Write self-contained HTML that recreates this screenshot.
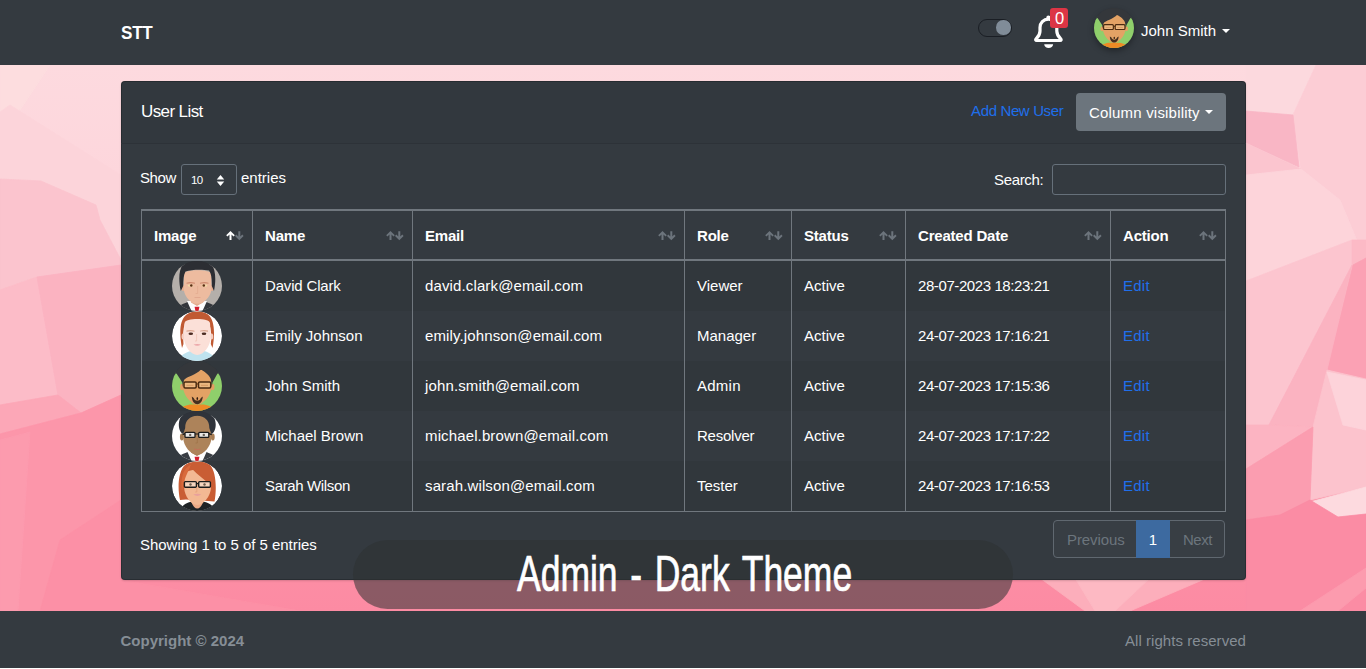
<!DOCTYPE html>
<html lang="en">
<head>
<meta charset="utf-8">
<title>STT - User List</title>
<style>
*{box-sizing:border-box;margin:0;padding:0}
html,body{width:1366px;height:669px;overflow:hidden;background:#fff}
body{font-family:"Liberation Sans",sans-serif;font-size:15px;color:#fff;position:relative;line-height:1.5}
a{text-decoration:none;color:#1f6feb}
.abs{position:absolute;white-space:nowrap}
#nav{position:absolute;left:0;top:0;width:1366px;height:65px;background:#343a40}
#bg{position:absolute;left:0;top:65px;width:1366px;height:546px;overflow:hidden;background:#fbb5c1}
#bg svg{display:block}
#footer{position:absolute;left:0;top:611px;width:1366px;height:57px;background:#343a40}
#card{position:absolute;left:121px;top:81px;width:1125px;height:499px;background:#343a40;border-radius:4px;box-shadow:inset 0 0 0 1px rgba(0,0,0,.22),0 1px 2px rgba(0,0,0,.15)}
#card-head{position:absolute;left:0;top:0;width:1125px;height:63px;border-bottom:1px solid #2d3238;background:rgba(0,0,0,.03);border-radius:4px 4px 0 0}
#pill{position:absolute;left:353px;top:540px;width:660px;height:69px;border-radius:35px;background:rgba(45,50,50,.55)}
#ptxt{position:absolute;left:164px;top:9px;font-size:50px;line-height:50px;white-space:nowrap;display:inline-block;transform:scaleX(.7095);transform-origin:0 0;color:#fff;-webkit-text-stroke:.7px #fff;word-spacing:4px}
#copy{left:120.500px;top:19px;font-weight:700;color:#868e96;font-size:15px;line-height:22px;letter-spacing:0}
#rights{right:120px;top:19px;color:#868e96;font-size:15px;line-height:22px;letter-spacing:.05px}
#brand{left:121px;top:18px;font-size:19px;font-weight:700;letter-spacing:-.3px;line-height:30px;transform:scaleX(.9);transform-origin:0 0}
#switch{position:absolute;left:978px;top:18.500px;width:34px;height:18.500px;border-radius:9.500px;background:#343a40;border:1.500px solid #1a1e24}
#switch i{position:absolute;right:.5px;top:.7px;width:14.500px;height:14.500px;border-radius:50%;background:#808c98}
#bell{left:1033px;top:14px}
#badge{left:1050px;top:8px;width:18px;height:20px;border-radius:3px;background:#dc3545;color:#fff;font-size:16.500px;line-height:20px;text-align:center;padding-left:1px}
#navava{left:1094px;top:8px;width:40px;height:40px;border-radius:50%;box-shadow:0 3px 6px rgba(0,0,0,.35)}
#uname{left:1141px;top:20px;font-size:15px;line-height:22px}
.caret{width:0;height:0;border-left:4px solid transparent;border-right:4px solid transparent;border-top:4px solid #fff}
#ctitle{left:20px;top:19px;font-size:17px;line-height:24px;letter-spacing:-.6px}
#addnew{left:850px;top:18px;font-size:15px;line-height:24px;letter-spacing:-.36px}
#colvis{left:955px;top:12px;width:150px;height:38px;border-radius:4px;background:#6c757d;font-size:15px;line-height:39px;padding-left:13px;letter-spacing:.19px}
#colvis .caret{position:absolute;left:129px;top:17px}
#lshow{left:19px;top:86px;line-height:22px;letter-spacing:-.4px}
#lsel{left:60px;top:83px;width:56px;height:31px;border:1px solid #66707a;border-radius:3px}
#lsel span{position:absolute;left:9px;top:8px;font-size:11.500px;line-height:14px;letter-spacing:-.6px}
#lsel svg{position:absolute;left:33.500px;top:9.500px}
#lent{left:120px;top:86px;line-height:22px}
#lsearch{left:873px;top:88px;line-height:22px;letter-spacing:-.35px}
#sinput{left:931px;top:83px;width:174px;height:31px;border:1px solid #66707a;border-radius:3px}
#tbl{position:absolute;left:20px;top:128px;width:1084px;border-collapse:collapse;table-layout:fixed;border:1px solid #70777e}
#tbl th,#tbl td{border:0 solid #70777e;border-left-width:1px;border-right-width:1px;padding:0 12px;text-align:left;vertical-align:middle;white-space:nowrap;font-size:15px}
#tbl th{height:50px;padding-top:2px;border-top-width:2px;border-bottom-width:2px;font-weight:700;position:relative;letter-spacing:-.2px}
#tbl td{height:50px}
#tbl td.em{letter-spacing:.13px}
#tbl td.dt{letter-spacing:-.41px}
#tbl td a{letter-spacing:.25px}
#tbl td.img{padding:0;text-align:center;font-size:0;line-height:0}
#tbl td.img svg{display:inline-block;vertical-align:top}
#tbl tbody tr:nth-child(odd){background:rgba(0,0,0,.05)}
#tbl th .so{position:absolute;right:8px;top:20px}
#tbl th .so path{fill:#6c747c}
#tbl th.asc .so .up{fill:#fff}
#info{left:19px;top:453px;line-height:22px;letter-spacing:-.03px}
#pager{left:932px;top:439px;width:172px;height:38px;border:1px solid #606870;border-radius:4px;font-size:15px;line-height:38px;color:#6c757d;background:#383e44}
#pager span{position:absolute;top:0;height:36px}
#pager .pv{left:13px;letter-spacing:-.1px}#pager .pn{left:129px;letter-spacing:-.5px}
#pager .pc{left:82px;width:34px;top:-1px;height:38px;line-height:40px;background:#3d6aa0;color:#fff;text-align:center}
</style>
</head>
<body>
<svg width="0" height="0" style="position:absolute">
<defs>
<clipPath id="cc"><circle cx="25" cy="25" r="25"/></clipPath>
<symbol id="av1" viewBox="0 0 50 50"><g clip-path="url(#cc)">
<rect x="0" y="3" width="50" height="47" fill="#b4afaa"/><rect x="0" y="0" width="50" height="4" fill="#2c2e33"/>
<path d="M2 50C4 45 10 43.500 15.500 41L34.500 41C40 43.500 46 45 48 50Z" fill="#33363b"/>
<path d="M15 40L35 40L30.500 50L19.500 50Z" fill="#fdfdfd"/>
<path d="M19 36h12v5.500l-6 3.500l-6-3.500z" fill="#e3ab8d"/>
<path d="M22.600 45.800L27.400 45.800L26.600 50L23.400 50Z" fill="#d3202f"/>
<ellipse cx="11" cy="27" rx="1.700" ry="3" fill="#e5ad90"/><ellipse cx="40" cy="27" rx="1.700" ry="3" fill="#e5ad90"/>
<path d="M12 13C12 8 39 8 39.300 13L39.400 28C39.200 33 36 38 31 41.500C28 43.300 23 43.300 20 41.500C15 38 12 33 11.800 28Z" fill="#edbb9f"/>
<path d="M8.800 30C6.500 20 6.500 9 11 3.500C15 -1 35 -1 39.500 3.500C44 9 44 20 42 30L39.800 25C40 18 39.500 13 37 9.500C30 8 19 8.500 13.500 10.500C11.500 14 11.300 19 11.200 25Z" fill="#2c2e33"/>
<path d="M14.500 21.700q4-1.300 8.500 0v1q-4.500-.8-8.500 0z" fill="#cf8c70"/><path d="M28 21.700q4.500-1.300 8.500 0v1q-4-.8-8.500 0z" fill="#cf8c70"/>
<ellipse cx="18.500" cy="24.600" rx="2.800" ry="1.200" fill="#f3d9a8"/><ellipse cx="32.500" cy="24.600" rx="2.800" ry="1.200" fill="#f3d9a8"/>
<circle cx="19.300" cy="24.400" r="1.250" fill="#5a2f16"/><circle cx="31.800" cy="24.400" r="1.250" fill="#5a2f16"/>
<path d="M25.600 25v7.500h-2" fill="none" stroke="#e2aa8e" stroke-width=".7"/>
<path d="M22.500 36.500h6" stroke="#dda38b" stroke-width=".8"/>
</g></symbol>
<symbol id="av2" viewBox="0 0 50 50"><g clip-path="url(#cc)">
<circle cx="25" cy="25" r="25" fill="#fff"/>
<path d="M6 50C8 44 14 41.500 19 40L32 40C37 41.500 42 44 44 50Z" fill="#bfe3ef"/>
<path d="M20 36h11v4.500q-5.500 3-11 0z" fill="#f7d2c6"/>
<path d="M10 37C7.500 24 7 10 14 4C19 -.5 31 -.5 36 3.500C43 9 43 24 40.500 37L38.800 33C40 24 39 16 36 10L14 10C11 16 10.800 24 11.500 33Z" fill="#c05a33"/>
<ellipse cx="11" cy="25.500" rx="1.500" ry="3" fill="#f5cfc2"/><ellipse cx="39.700" cy="25.500" rx="1.500" ry="3" fill="#f5cfc2"/>
<path d="M12.500 12C13 6.500 37.500 6.500 38 12L38.800 26C38.500 35 31.500 44 25.300 44C19 44 12 35 11.800 26Z" fill="#fbe0d8"/>
<path d="M13 10C13 4 19 2.500 25 4.500C30 2.500 37.500 4 37.500 10C33 6.500 29 6 25.500 7C22 6 17 6.500 13 10Z" fill="#c05a33"/>
<path d="M14.500 19.600q4-1.400 8 .1v1q-4-1-8 0z" fill="#d9a58f"/><path d="M28 19.700q4-1.500 8-.1v1.100q-4-1-8-.1z" fill="#d9a58f"/>
<ellipse cx="18.800" cy="22.800" rx="2.300" ry="1.300" fill="#4a2b22"/><ellipse cx="32" cy="22.800" rx="2.300" ry="1.300" fill="#4a2b22"/>
<path d="M24.600 23v7h-1.600" fill="none" stroke="#efc4b6" stroke-width=".8"/>
<path d="M21.500 33.500q3.700-1.200 7.400 0q-3.700 2.400-7.400 0z" fill="#eca6a9"/>
</g></symbol>
<symbol id="av3" viewBox="0 0 50 50"><g clip-path="url(#cc)">
<rect x="0" y="11" width="50" height="39" fill="#8fcf6b"/><rect x="0" y="0" width="50" height="12" fill="#34373b"/>
<path d="M6 50C8 46 13 44.500 18 43.500L32 43.500C37 44.500 42 46 44 50Z" fill="#ee8a25"/>
<path d="M19.500 36h11v6q-5.500 3.500-11 0z" fill="#dd9a5c"/>
<ellipse cx="10" cy="26" rx="1.900" ry="3.200" fill="#e3a062"/><ellipse cx="40.600" cy="26" rx="1.900" ry="3.200" fill="#e3a062"/>
<path d="M11.500 14C12 7 38.500 7 39 14L39.400 27C39 33 33 43 25.300 43C17.500 43 11.500 33 11.200 27Z" fill="#e3a265"/>
<path d="M0 15L4.500 12.500L10.300 21.500L10.800 26L12 19C14 16 24 14 29 8.500C33 11 38 14.500 39 19L39.800 26L40.500 21.500L45.500 12.500L50 15L50 0L0 0Z" fill="#34373b"/>
<rect x="12" y="20.900" width="12.200" height="6" rx="1.200" fill="#ecb880" stroke="#4a2a10" stroke-width="1.500"/><rect x="26.500" y="20.900" width="12.200" height="6" rx="1.200" fill="#ecb880" stroke="#4a2a10" stroke-width="1.500"/>
<path d="M24 23h2.700" stroke="#5b3512" stroke-width="1.200"/>
<path d="M14.500 24.300h7M29 24.300h7" stroke="#c98a52" stroke-width=".7"/>
<path d="M19.800 35.500C20 40.500 22.500 43.200 25.300 43.200C28 43.200 30.500 40.500 30.800 35.500L28.800 37C28.300 38.800 27 39.600 25.300 39.600C23.500 39.600 22.300 38.800 21.800 37Z" fill="#46301f"/>
<ellipse cx="25.300" cy="37.400" rx=".8" ry="1.500" fill="#2c1a10"/>
</g></symbol>
<symbol id="av4" viewBox="0 0 50 50"><g clip-path="url(#cc)">
<rect x="0" y="4" width="50" height="46" fill="#fff"/><rect x="0" y="0" width="50" height="5" fill="#2f333a"/>
<path d="M2 50C4 45 10 43.500 15.500 41L34.500 41C40 43.500 46 45 48 50Z" fill="#393d43"/>
<path d="M15 40L35 40L30.500 50L19.500 50Z" fill="#fdfdfd"/>
<path d="M19 36h12v5.500l-6 3.500l-6-3.500z" fill="#a57a50"/>
<path d="M22.600 45.800L27.400 45.800L26.600 50L23.400 50Z" fill="#d3202f"/>
<ellipse cx="9.800" cy="26" rx="1.900" ry="3.400" fill="#a87d53"/><ellipse cx="40.800" cy="26" rx="1.900" ry="3.400" fill="#a87d53"/>
<path d="M11.500 14C12 1 38.500 1 39.200 14L39.500 27C39 35 32 43.800 25.300 43.800C18.500 43.800 11.500 35 11.200 27Z" fill="#ad835a"/>
<path d="M11.300 23C6.500 21.500 5.500 12 8.500 6.500C11 2 18 -1 25.300 -1C32.500 -1 39.500 2 42 6.500C45 12 44 21.500 39.300 23L37.300 17C37.500 10 33 5 25.300 4.800C17.500 5 13 10 13.200 17Z" fill="#2f333a"/>
<rect x="13" y="21.300" width="10" height="5" rx=".9" fill="#e9e7e4" stroke="#1b1b1b" stroke-width="1.300"/><rect x="26.700" y="21.300" width="10.100" height="5" rx=".9" fill="#e9e7e4" stroke="#1b1b1b" stroke-width="1.300"/>
<path d="M23 23h3.700M13 22.600L10.600 23.600M36.800 22.600L39.800 23.600" stroke="#1b1b1b" stroke-width="1.200" fill="none"/>
<circle cx="18.200" cy="23.900" r="1.200" fill="#6a625b"/><circle cx="31.800" cy="23.900" r="1.200" fill="#6a625b"/>
<path d="M25.300 27v5h-1.700" fill="none" stroke="#9f7349" stroke-width=".8"/>
<path d="M22 38q3.300 1.200 6.600 0" fill="none" stroke="#c4705a" stroke-width="1"/>
</g></symbol>
<symbol id="av5" viewBox="0 0 50 50"><g clip-path="url(#cc)">
<circle cx="25" cy="25" r="25" fill="#fff"/>
<path d="M8 39C5.500 28 6 12 12 5C17 -.5 32 -1 38 4C44 10 45 28 42.500 40.500L36 40L14 38.500Z" fill="#c95d34"/>
<path d="M8 50C9 45 13 42.500 18 41L33 41C38 42.500 42 45 43 50Z" fill="#1f2326"/>
<path d="M19.500 35h11.500v6.500q-2.500 6-5.700 6q-3.300 0-5.800-6z" fill="#eeaa86"/>
<path d="M12.400 14C13 7 38 7 38.800 14L39 27C38.500 35 31.500 44 25.300 44C19 44 12.500 35 12.200 27Z" fill="#f3b893"/>
<path d="M10 30C8 18 11 7 19 3.500C17.500 8 15 12 12.600 19Z" fill="#d96a3c"/>
<path d="M18 5.500C24 1 36 2 40 9C43 15 43 24 41 31L38.800 26C37 21 27 16 18 5.500Z" fill="#c95d34"/>
<rect x="12.400" y="20.600" width="12" height="5.600" rx="1" fill="#f6d5bf" stroke="#1b1b1b" stroke-width="1.400"/><rect x="26.700" y="20.600" width="11.700" height="5.600" rx="1" fill="#f6d5bf" stroke="#1b1b1b" stroke-width="1.400"/>
<path d="M24.200 22.600h2.700" stroke="#1b1b1b" stroke-width="1.300"/>
<circle cx="18.500" cy="23.500" r="1.200" fill="#6b5a4c"/><circle cx="32.500" cy="23.500" r="1.200" fill="#6b5a4c"/>
<path d="M24.800 26.500v4.500h-1.600" fill="none" stroke="#e3a07c" stroke-width=".8"/>
<path d="M21.300 33.600q4-1.700 8 0q-4 2.800-8 0z" fill="#e8a09c"/>
</g></symbol>
</defs>
</svg>
<div id="nav">
<div class="abs" id="brand">STT</div>
<div id="switch"><i></i></div>
<svg id="bell" class="abs" width="32" height="36" viewBox="0 0 32 36"><path d="M15.400 5.200C10.400 5.200 7 8.800 7 13.600V17C7 20.500 5.500 22.600 3.200 24.600C2.200 25.500 2.600 26.500 3.800 26.500H27C28.200 26.500 28.600 25.500 27.600 24.600C25.300 22.600 23.800 20.500 23.800 17V13.600C23.800 8.800 20.400 5.200 15.400 5.200Z" fill="none" stroke="#fff" stroke-width="3.200" stroke-linejoin="round"/><rect x="13.300" y="1.600" width="4.200" height="4.500" rx="2.100" fill="#fff"/><path d="M11.200 30.200H20.100C20.100 32.400 18 34 15.650 34C13.300 34 11.200 32.400 11.200 30.200Z" fill="#fff"/></svg>
<div class="abs" id="badge">0</div>
<div class="abs" id="navava"><svg width="40" height="40"><use href="#av3"/></svg></div>
<div class="abs" id="uname">John Smith</div>
<div class="abs caret" style="left:1222px;top:29px"></div>
</div>
<div id="bg"><svg width="1366" height="546" viewBox="0 65 1366 546" preserveAspectRatio="none">
<defs><linearGradient id="g0" x1="0" y1="65" x2="0" y2="611" gradientUnits="userSpaceOnUse">
<stop offset="0" stop-color="#fddadf"/><stop offset=".2" stop-color="#fdd6dc"/><stop offset=".36" stop-color="#fcc3cd"/><stop offset=".6" stop-color="#fbb0be"/><stop offset=".66" stop-color="#fc9aad"/><stop offset=".8" stop-color="#fc92a7"/><stop offset="1" stop-color="#fc8ba3"/></linearGradient></defs>
<rect x="0" y="65" width="1366" height="546" fill="url(#g0)"/>
<!-- left strip -->
<polygon points="0,65 50,65 20,110 0,118" fill="#fddddf" stroke="#fddddf" stroke-width=".8"/>
<polygon points="10,105 121,175 121,260 100,220 96,205 41,181 0,179 0,112" fill="#fcd4da" stroke="#fcd4da" stroke-width=".8"/>
<polygon points="0,179 41,181 96,205 100,220 121,260 121,265 37,277 0,290" fill="#fbc4ce" stroke="#fbc4ce" stroke-width=".8"/>
<polygon points="0,290 37,277 58,395 0,405" fill="#fcbcc8" stroke="#fcbcc8" stroke-width=".8"/>
<polygon points="37,277 121,265 121,395 81,413 58,395" fill="#fbb3c1" stroke="#fbb3c1" stroke-width=".8"/>
<polygon points="0,405 58,395 81,413 0,434" fill="#fca7b7" stroke="#fca7b7" stroke-width=".8"/>
<polygon points="0,434 81,413 121,395 121,611 0,611" fill="#fc96aa" stroke="#fc96aa" stroke-width=".8"/>
<polygon points="0,440 30,432 18,611 0,611" fill="#fc9bae" stroke="#fc9bae" stroke-width=".8"/>
<polygon points="60,540 121,500 121,580 300,611 40,611" fill="#fc90a6" stroke="#fc90a6" stroke-width=".8"/>
<!-- right strip -->
<polygon points="1246,65 1316,65 1293,115 1246,111" fill="#fcd9de" stroke="#fcd9de" stroke-width=".8"/>
<polygon points="1316,65 1366,65 1366,262 1340,200 1301,169 1293,115" fill="#fccdd5" stroke="#fccdd5" stroke-width=".8"/>
<polygon points="1246,111 1293,115 1299,167 1246,143" fill="#f9b6c5" stroke="#f9b6c5" stroke-width=".8"/>
<polygon points="1246,143 1301,169 1246,177" fill="#fbc5cf" stroke="#fbc5cf" stroke-width=".8"/>
<polygon points="1246,175 1301,169 1340,200 1366,262 1352,240 1246,281" fill="#fdd4da" stroke="#fdd4da" stroke-width=".8"/>

<polygon points="1246,281 1352,240 1352,265 1269,425 1246,425" fill="#fcc5cf" stroke="#fcc5cf" stroke-width=".8"/>
<polygon points="1352,240 1366,240 1366,379 1352,265" fill="#fcbac6" stroke="#fcbac6" stroke-width=".8"/>
<polygon points="1353,265 1366,258 1366,379 1327,370" fill="#fba1b4" stroke="#fba1b4" stroke-width=".8"/>
<polygon points="1352,265 1327,370 1313,427 1269,425" fill="#fbb3c1" stroke="#fbb3c1" stroke-width=".8"/>
<polygon points="1327,370 1366,379 1366,487 1310,500 1313,427" fill="#fcc3cd" stroke="#fcc3cd" stroke-width=".8"/>
<polygon points="1327,372 1366,380 1366,430 1343,425" fill="#fdd3da" stroke="#fdd3da" stroke-width=".8"/>
<polygon points="1246,425 1269,425 1313,427 1246,469" fill="#fcb4c2" stroke="#fcb4c2" stroke-width=".8"/>
<polygon points="1246,469 1313,427 1310,500 1280,515 1246,520" fill="#fb9db0" stroke="#fb9db0" stroke-width=".8"/>
<polygon points="1310,502 1366,487 1366,514 1338,517" fill="#fddadf" stroke="#fddadf" stroke-width=".8"/>
<polygon points="1246,520 1280,515 1310,500 1338,517 1366,514 1366,611 1246,611" fill="#fb8ca4" stroke="#fb8ca4" stroke-width=".8"/>
<polygon points="1040,578 1207,578 1130,611 1085,611" fill="#fcaebb" stroke="#fcaebb" stroke-width=".8"/>
<polygon points="1075,578 1150,578 1115,611 1095,611" fill="#fdb9c3" stroke="#fdb9c3" stroke-width=".8"/>
<polygon points="1300,611 1366,568 1366,588 1338,611" fill="#fc9bae" stroke="#fc9bae" stroke-width=".8"/>
</svg></div>
<div id="card"><div id="card-head"></div>
<div class="abs" id="ctitle">User List</div>
<a class="abs" id="addnew" href="#">Add New User</a>
<div class="abs" id="colvis">Column visibility<i class="caret"></i></div>
<div class="abs" id="lshow">Show</div>
<div class="abs" id="lsel"><span>10</span><svg width="9" height="11" viewBox="0 0 8 10"><path d="M4 0L7.400 4H.6zM4 10L.6 6h6.800z" fill="#fff"/></svg></div>
<div class="abs" id="lent">entries</div>
<div class="abs" id="lsearch">Search:</div>
<div class="abs" id="sinput"></div>
<table id="tbl"><colgroup><col style="width:111px"><col style="width:160px"><col style="width:272px"><col style="width:107px"><col style="width:114px"><col style="width:205px"><col style="width:115px"></colgroup>
<thead><tr><th class=asc><span>Image</span><svg class="so" width="18" height="10" viewBox="0 0 18 10"><path class="up" d="M4.500 0L.2 4.300L1.500 5.600L3.500 3.600V9H5.500V3.600L7.500 5.600L8.800 4.300Z"/><path class="dn" d="M13.300 9.200L9 4.900L10.300 3.600L12.300 5.600V.2H14.300V5.600L16.300 3.600L17.600 4.900Z"/></svg></th><th><span>Name</span><svg class="so" width="18" height="10" viewBox="0 0 18 10"><path class="up" d="M4.500 0L.2 4.300L1.500 5.600L3.500 3.600V9H5.500V3.600L7.500 5.600L8.800 4.300Z"/><path class="dn" d="M13.300 9.200L9 4.900L10.300 3.600L12.300 5.600V.2H14.300V5.600L16.300 3.600L17.600 4.900Z"/></svg></th><th><span>Email</span><svg class="so" width="18" height="10" viewBox="0 0 18 10"><path class="up" d="M4.500 0L.2 4.300L1.500 5.600L3.500 3.600V9H5.500V3.600L7.500 5.600L8.800 4.300Z"/><path class="dn" d="M13.300 9.200L9 4.900L10.300 3.600L12.300 5.600V.2H14.300V5.600L16.300 3.600L17.600 4.900Z"/></svg></th><th><span>Role</span><svg class="so" width="18" height="10" viewBox="0 0 18 10"><path class="up" d="M4.500 0L.2 4.300L1.500 5.600L3.500 3.600V9H5.500V3.600L7.500 5.600L8.800 4.300Z"/><path class="dn" d="M13.300 9.200L9 4.900L10.300 3.600L12.300 5.600V.2H14.300V5.600L16.300 3.600L17.600 4.900Z"/></svg></th><th><span>Status</span><svg class="so" width="18" height="10" viewBox="0 0 18 10"><path class="up" d="M4.500 0L.2 4.300L1.500 5.600L3.500 3.600V9H5.500V3.600L7.500 5.600L8.800 4.300Z"/><path class="dn" d="M13.300 9.200L9 4.900L10.300 3.600L12.300 5.600V.2H14.300V5.600L16.300 3.600L17.600 4.900Z"/></svg></th><th><span>Created Date</span><svg class="so" width="18" height="10" viewBox="0 0 18 10"><path class="up" d="M4.500 0L.2 4.300L1.500 5.600L3.500 3.600V9H5.500V3.600L7.500 5.600L8.800 4.300Z"/><path class="dn" d="M13.300 9.200L9 4.900L10.300 3.600L12.300 5.600V.2H14.300V5.600L16.300 3.600L17.600 4.900Z"/></svg></th><th><span>Action</span><svg class="so" width="18" height="10" viewBox="0 0 18 10"><path class="up" d="M4.500 0L.2 4.300L1.500 5.600L3.500 3.600V9H5.500V3.600L7.500 5.600L8.800 4.300Z"/><path class="dn" d="M13.300 9.200L9 4.900L10.300 3.600L12.300 5.600V.2H14.300V5.600L16.300 3.600L17.600 4.900Z"/></svg></th></tr></thead>
<tbody>
<tr><td class="img"><svg width="50" height="50"><use href="#av1"/></svg></td><td style="letter-spacing:-.17px">David Clark</td><td class="em">david.clark@email.com</td><td>Viewer</td><td>Active</td><td class="dt">28-07-2023 18:23:21</td><td><a href="#">Edit</a></td></tr>
<tr><td class="img"><svg width="50" height="50"><use href="#av2"/></svg></td><td>Emily Johnson</td><td class="em">emily.johnson@email.com</td><td>Manager</td><td>Active</td><td class="dt">24-07-2023 17:16:21</td><td><a href="#">Edit</a></td></tr>
<tr><td class="img"><svg width="50" height="50"><use href="#av3"/></svg></td><td>John Smith</td><td class="em">john.smith@email.com</td><td style="letter-spacing:.24px">Admin</td><td>Active</td><td class="dt">24-07-2023 17:15:36</td><td><a href="#">Edit</a></td></tr>
<tr><td class="img"><svg width="50" height="50"><use href="#av4"/></svg></td><td>Michael Brown</td><td class="em">michael.brown@email.com</td><td style="letter-spacing:-.23px">Resolver</td><td>Active</td><td class="dt">24-07-2023 17:17:22</td><td><a href="#">Edit</a></td></tr>
<tr><td class="img"><svg width="50" height="50"><use href="#av5"/></svg></td><td style="letter-spacing:-.36px">Sarah Wilson</td><td class="em">sarah.wilson@email.com</td><td>Tester</td><td>Active</td><td class="dt">24-07-2023 17:16:53</td><td><a href="#">Edit</a></td></tr>
</tbody></table>
<div class="abs" id="info">Showing 1 to 5 of 5 entries</div>
<div class="abs" id="pager"><span class="pv">Previous</span><span class="pc">1</span><span class="pn">Next</span></div>
</div>
<div id="pill"><span id="ptxt">Admin - Dark Theme</span></div>
<div id="footer"><div class="abs" id="copy">Copyright © 2024</div><div class="abs" id="rights">All rights reserved</div></div>
</body>
</html>
